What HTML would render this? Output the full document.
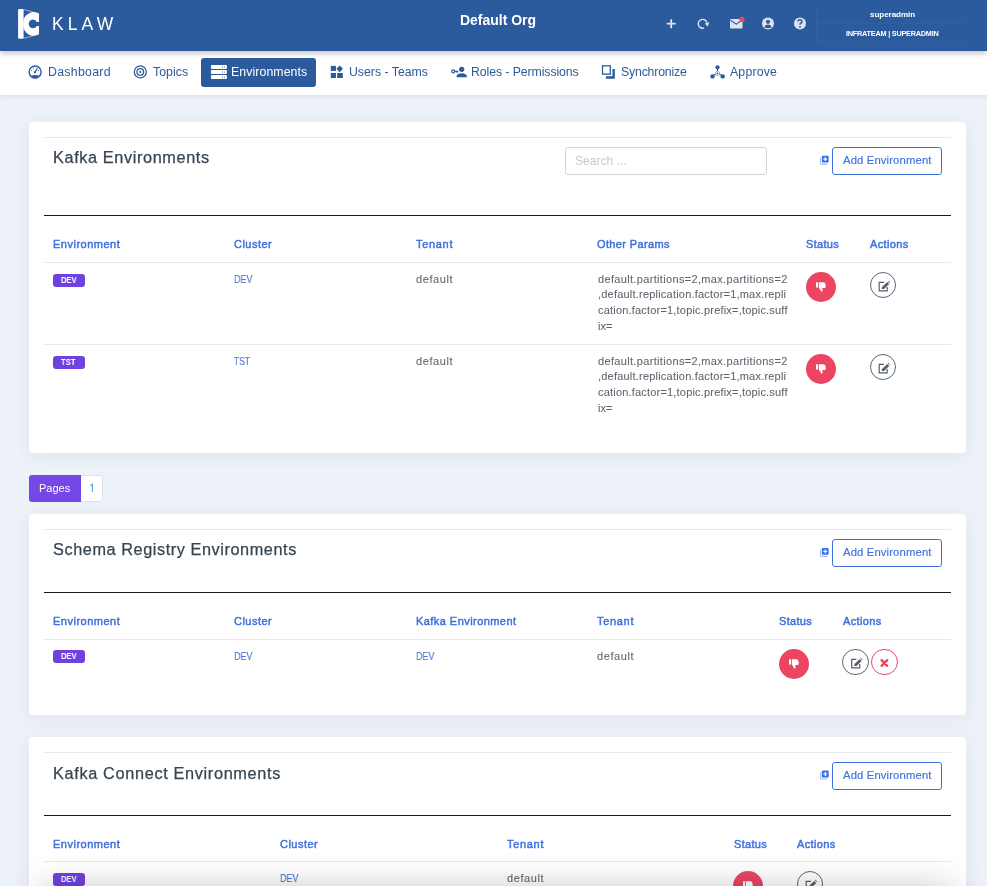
<!DOCTYPE html><html><head><meta charset="utf-8"><style>
*{margin:0;padding:0;box-sizing:border-box}
html,body{width:987px;height:886px;overflow:hidden}
body{background:#edf1f8;font-family:"Liberation Sans",sans-serif;position:relative}
.t{position:absolute;white-space:nowrap;line-height:1;will-change:transform}
.box{position:absolute}
svg{position:absolute;overflow:visible}
.card{position:absolute;left:29px;width:937px;background:#fff;border-radius:4px;box-shadow:0 3px 18px rgba(50,60,90,.07)}
.hl{position:absolute;left:44px;width:907px;height:1px;background:#e9ecef}
.bl{position:absolute;left:44px;width:907px;height:1px;background:#1a1a1a}
</style></head><body>
<div class="box" style="left:0px;top:0px;width:987px;height:51px;background:#2b5a9d;box-shadow:0 2px 6px rgba(0,0,0,.26);z-index:3"></div>
<div style="position:absolute;left:0;top:0;width:987px;height:51px;z-index:4">
<svg style="left:0;top:0" width="60" height="51" viewBox="0 0 60 51">
<rect x="18.1" y="9" width="5.5" height="29.7" rx="1.2" fill="#fff"/>
<path d="M23.3,20.2 A11,11.8 0 0 1 39,13.5 L39,21.9 L36.8,21.9 A4.3,4.3 0 1 0 36.8,25.9 L39,25.9 L39,34.3 A11,11.8 0 0 1 23.3,27.6 Z" fill="#fff"/>
<path d="M23.5,9.4 L33.5,12.2 M23.5,38.4 L33.5,35.6" stroke="rgba(255,255,255,.75)" stroke-width="0.7" fill="none"/>
</svg>
<div class="t" style="left:52.00px;top:16px;font-size:17.5px;color:#fff;font-weight:normal;letter-spacing:4.091px;">KLAW</div>
<div class="t" style="left:459.50px;top:13px;font-size:14px;color:#fff;font-weight:bold;letter-spacing:-0.018px;">Default Org</div>
<svg style="left:660px;top:12px" width="22" height="22" viewBox="660 12 22 22"><path d="M671.2,19.2 V28.2 M666.7,23.7 H675.7" stroke="#dde4ef" stroke-width="1.8"/></svg>
<svg style="left:690px;top:12px" width="26" height="24" viewBox="690 12 26 24"><path d="M704.2,27.9 A4.4,4.4 0 1 1 706.9,22.6" stroke="#dde4ef" stroke-width="1.4" fill="none"/><path d="M704.6,23.5 L709.3,22.2 L707.8,26.6 Z" fill="#dde4ef"/></svg>
<svg style="left:725px;top:12px" width="24" height="22" viewBox="725 12 24 22"><rect x="730" y="19" width="12.5" height="9.5" rx="1.2" fill="#dde4ef"/><path d="M730.5,20.2 L736.25,24.2 L742,20.2" stroke="#2b5a9d" stroke-width="1.1" fill="none"/><circle cx="742" cy="19.4" r="2.6" fill="#ef4562"/></svg>
<svg style="left:755px;top:12px" width="26" height="24" viewBox="755 12 26 24"><circle cx="768" cy="23.6" r="6" fill="#dde4ef"/><circle cx="768" cy="21.8" r="2.1" fill="#2b5a9d"/><path d="M764.2,27.2 Q765,24.6 768,24.6 Q771,24.6 771.8,27.2 Q768,29.4 764.2,27.2Z" fill="#2b5a9d"/></svg>
<svg style="left:787px;top:12px" width="26" height="24" viewBox="787 12 26 24"><circle cx="800" cy="23.6" r="6" fill="#dde4ef"/><path d="M798,21.6 Q798,19.7 800,19.7 Q802,19.7 802,21.5 Q802,22.7 800.8,23.2 Q800,23.6 800,24.8" stroke="#2b5a9d" stroke-width="1.5" fill="none"/><circle cx="800" cy="26.9" r="0.95" fill="#2b5a9d"/></svg>
<div class="box" style="left:816px;top:6px;width:151px;height:36px;border-left:1px solid rgba(255,255,255,.03);border-bottom:1px solid rgba(255,255,255,.03)"></div>
<div class="box" style="left:816px;top:23px;width:151px;height:1px;background:rgba(255,255,255,.03)"></div>
<div class="t" style="left:869.50px;top:11px;font-size:8.1px;color:#fff;font-weight:bold;letter-spacing:-0.081px;">superadmin</div>
<div class="t" style="left:845.50px;top:30px;font-size:7.3px;color:#fff;font-weight:bold;letter-spacing:-0.229px;">INFRATEAM | SUPERADMIN</div>
</div>
<div class="box" style="left:0px;top:51px;width:987px;height:44px;background:#fff;z-index:2;box-shadow:0 1px 6px rgba(40,50,70,.10)"></div>
<div style="position:absolute;left:0;top:0;width:987px;height:95px;z-index:3">
<div class="box" style="left:201px;top:58px;width:115px;height:29px;background:#2b5a9d;border-radius:3px"></div>
<div class="t" style="left:47.70px;top:66px;font-size:12.3px;color:#2b5a9d;font-weight:normal;letter-spacing:0.298px;">Dashboard</div>
<div class="t" style="left:153.00px;top:66px;font-size:12.3px;color:#2b5a9d;font-weight:normal;letter-spacing:0.059px;">Topics</div>
<div class="t" style="left:349.00px;top:66px;font-size:12.3px;color:#2b5a9d;font-weight:normal;letter-spacing:-0.009px;">Users - Teams</div>
<div class="t" style="left:471.00px;top:66px;font-size:12.3px;color:#2b5a9d;font-weight:normal;letter-spacing:-0.088px;">Roles - Permissions</div>
<div class="t" style="left:621.00px;top:66px;font-size:12.3px;color:#2b5a9d;font-weight:normal;letter-spacing:-0.183px;">Synchronize</div>
<div class="t" style="left:730.00px;top:66px;font-size:12.3px;color:#2b5a9d;font-weight:normal;letter-spacing:0.173px;">Approve</div>
<div class="t" style="left:231.00px;top:66px;font-size:12.3px;color:#fff;font-weight:normal;letter-spacing:0.088px;">Environments</div>
<svg style="left:0;top:0" width="987" height="95" viewBox="0 0 987 95">
<g fill="none" stroke="#2b5a9d" stroke-width="1.4"><circle cx="35.1" cy="72" r="6"/></g>
<path d="M30.3,76.2 Q35.1,73.6 39.9,76.2 Q38,78.4 35.1,78.4 Q32.2,78.4 30.3,76.2Z" fill="#2b5a9d"/>
<path d="M35.1,72.2 L37.3,68.3" stroke="#2b5a9d" stroke-width="1.3"/><circle cx="34.9" cy="72.3" r="1.1" fill="#2b5a9d"/>
<circle cx="31.6" cy="70.5" r="0.6" fill="#2b5a9d"/><circle cx="33.7" cy="68.5" r="0.6" fill="#2b5a9d"/><circle cx="38.5" cy="70.5" r="0.6" fill="#2b5a9d"/>
<g fill="none" stroke="#2b5a9d" stroke-width="1.3"><circle cx="140.3" cy="71.9" r="6"/><circle cx="140.3" cy="71.9" r="3.3"/></g>
<circle cx="140.3" cy="71.9" r="1.1" fill="#2b5a9d"/>
<g fill="#fff"><rect x="210.9" y="65" width="16" height="4" rx="1"/><rect x="210.9" y="70" width="16" height="4" rx="1"/><rect x="210.9" y="75" width="16" height="4" rx="1"/></g>
<g fill="#2b5a9d"><circle cx="222.5" cy="67" r=".6"/><circle cx="224.5" cy="67" r=".6"/><circle cx="222.5" cy="72" r=".6"/><circle cx="224.5" cy="72" r=".6"/><circle cx="222.5" cy="77" r=".6"/><circle cx="224.5" cy="77" r=".6"/></g>
<g fill="#2b5a9d"><rect x="330.8" y="65.9" width="5.2" height="5"/><rect x="330.8" y="73" width="5.2" height="5"/><rect x="337.2" y="73" width="5.6" height="5"/><path d="M339.7,65.4 L343,68.8 L339.7,72.2 L336.4,68.8Z"/></g>
<g fill="#2b5a9d"><circle cx="461.7" cy="69.3" r="2.6"/><path d="M456.4,77.3 Q456.6,73.4 461.7,73.3 Q466.8,73.4 467,77.3Z"/></g>
<circle cx="453.3" cy="71.4" r="1.5" fill="none" stroke="#2b5a9d" stroke-width="1.2"/><path d="M454.8,71.4 H458.3 M457.2,71.4 V73" stroke="#2b5a9d" stroke-width="1.1"/>
<rect x="602.5" y="65.8" width="7.8" height="8.3" fill="none" stroke="#2b5a9d" stroke-width="1.3"/>
<path d="M612.4,69.1 H614.8 V78.7 H605.9 V76.3 H612.4Z" fill="#2b5a9d"/>
<g fill="#2b5a9d"><circle cx="717.5" cy="67.3" r="2.1"/><circle cx="712.5" cy="76.4" r="2.2"/><circle cx="722.7" cy="76.4" r="2.2"/><circle cx="717.5" cy="73.4" r="0.9"/></g>
<circle cx="717.5" cy="73.6" r="2.2" fill="none" stroke="#2b5a9d" stroke-width=".7" stroke-opacity=".6"/>
<path d="M717.5,69 V71.2 M714,75.2 L715.6,73.8 M721,75.2 L719.4,73.8" stroke="#2b5a9d" stroke-width="1.1"/>
</svg>
</div>
<div class="card" style="top:122px;height:331px"></div>
<div class="card" style="top:513.7px;height:201.0999999999999px"></div>
<div class="card" style="top:737.2px;height:262.79999999999995px"></div>
<div class="box" style="left:44px;top:137px;width:907px;height:1px;background:#eae8ea"></div>
<div class="t" style="left:52.70px;top:149px;font-size:16.3px;color:#364452;font-weight:normal;letter-spacing:0.614px;-webkit-text-stroke:.25px #364452">Kafka Environments</div>
<div class="box" style="left:565px;top:147px;width:202px;height:28px;border:1px solid #d4d4d6;border-radius:3px;background:#fff"></div>
<div class="t" style="left:575.20px;top:155px;font-size:12px;color:#c6c8ca;font-weight:normal;letter-spacing:0.02px;">Search ...</div>
<svg style="left:0;top:0" width="987" height="886" viewBox="0 0 987 886"><g transform="translate(819.8,155.40)">
<path d="M0.75,2 V8.2 Q0.75,8.8 1.4,8.8 H7.4" fill="none" stroke="#3e70de" stroke-opacity=".45" stroke-width="1.2"/>
<rect x="2.1" y="0.4" width="6.8" height="6.8" rx="1" fill="#3e70de"/>
<path d="M5.5,1.9 V5.7 M3.6,3.8 H7.4" stroke="#fff" stroke-width="1.2"/></g></svg>
<div class="box" style="left:832px;top:147px;width:110px;height:28px;border:1px solid #3e70de;border-radius:3px"></div>
<div class="t" style="left:842.70px;top:155px;font-size:11.3px;color:#3e70de;font-weight:normal;letter-spacing:0.127px;-webkit-text-stroke:.15px #3e70de">Add Environment</div>
<div class="box" style="left:44px;top:215px;width:907px;height:1px;background:#1a1a1a"></div>
<div class="t" style="left:52.90px;top:239px;font-size:11px;color:#3e70de;font-weight:normal;letter-spacing:0.5px;-webkit-text-stroke:.45px #3e70de">Environment</div>
<div class="t" style="left:234.00px;top:239px;font-size:11px;color:#3e70de;font-weight:normal;letter-spacing:0.47px;-webkit-text-stroke:.45px #3e70de">Cluster</div>
<div class="t" style="left:416.00px;top:239px;font-size:11px;color:#3e70de;font-weight:normal;letter-spacing:0.686px;-webkit-text-stroke:.45px #3e70de">Tenant</div>
<div class="t" style="left:597.00px;top:239px;font-size:11px;color:#3e70de;font-weight:normal;letter-spacing:0.367px;-webkit-text-stroke:.45px #3e70de">Other Params</div>
<div class="t" style="left:806.00px;top:239px;font-size:11px;color:#3e70de;font-weight:normal;letter-spacing:0.323px;-webkit-text-stroke:.45px #3e70de">Status</div>
<div class="t" style="left:870.00px;top:239px;font-size:11px;color:#3e70de;font-weight:normal;letter-spacing:0.355px;-webkit-text-stroke:.45px #3e70de">Actions</div>
<div class="box" style="left:44px;top:262px;width:907px;height:1px;background:#eae8ea"></div>
<div class="box" style="left:53px;top:274px;width:32px;height:13px;background:#6f42e0;border-radius:3px"></div>
<div class="t" style="left:61.00px;top:275px;font-size:9.5px;color:#fff;font-weight:bold;letter-spacing:0px;transform:scaleX(.8);transform-origin:0 0">DEV</div>
<div class="t" style="left:234.00px;top:274px;font-size:11px;color:#4a78d6;font-weight:normal;letter-spacing:0px;-webkit-text-stroke:.12px #4a78d6;transform:scaleX(0.8161);transform-origin:0 0">DEV</div>
<div class="t" style="left:416.00px;top:274px;font-size:11px;color:#5f6770;font-weight:normal;letter-spacing:0.605px;-webkit-text-stroke:.08px #5a626b">default</div>
<div class="t" style="left:597.60px;top:274px;font-size:11px;color:#5f6770;font-weight:normal;letter-spacing:0.333px;-webkit-text-stroke:.08px #5a626b">default.partitions=2,max.partitions=2</div>
<div class="t" style="left:597.60px;top:289px;font-size:11px;color:#5f6770;font-weight:normal;letter-spacing:0.21px;-webkit-text-stroke:.08px #5a626b">,default.replication.factor=1,max.repli</div>
<div class="t" style="left:597.60px;top:305px;font-size:11px;color:#5f6770;font-weight:normal;letter-spacing:0.191px;-webkit-text-stroke:.08px #5a626b">cation.factor=1,topic.prefix=,topic.suff</div>
<div class="t" style="left:597.60px;top:321px;font-size:11px;color:#5f6770;font-weight:normal;letter-spacing:0.028px;-webkit-text-stroke:.08px #5a626b">ix=</div>
<div class="box" style="left:806px;top:272px;width:30px;height:30px;border-radius:50%;background:#ec4561"></div>
<svg style="left:0;top:0" width="987" height="886" viewBox="0 0 987 886"><g transform="translate(816,282)" fill="#fff">
<rect x="0" y="0.3" width="2" height="5.2"/>
<path d="M2.8,0.3 H7.5 Q9.2,0.3 9.4,2 L9.8,4.6 Q9.9,6 8.6,6 H6.2 L6.6,8.6 Q6.5,9.8 5.6,9.8 L2.8,5.6Z"/></g></svg>
<div class="box" style="left:870px;top:272px;width:26px;height:26px;border-radius:50%;border:1px solid #5a6570"></div>
<svg style="left:0;top:0" width="987" height="886" viewBox="0 0 987 886"><g transform="translate(878.6,281.7)">
<path d="M5.4,0.6 H0.6 V9.2 H8.6 V5.4" fill="none" stroke="#565f6a" stroke-width="1.2"/>
<path d="M3,7.4 L3.4,5.4 L8.6,0.2 L10.6,2.2 L5.4,7.4Z" fill="#565f6a"/><path d="M9.2,-0.4 L9.8,-1 L11.6,0.8 L11,1.4Z" fill="#565f6a"/></g></svg>
<div class="box" style="left:53px;top:356px;width:32px;height:13px;background:#6f42e0;border-radius:3px"></div>
<div class="t" style="left:61.00px;top:357px;font-size:9.5px;color:#fff;font-weight:bold;letter-spacing:0px;transform:scaleX(.8);transform-origin:0 0">TST</div>
<div class="t" style="left:234.00px;top:356px;font-size:11px;color:#4a78d6;font-weight:normal;letter-spacing:0px;-webkit-text-stroke:.12px #4a78d6;transform:scaleX(0.7789);transform-origin:0 0">TST</div>
<div class="t" style="left:416.00px;top:356px;font-size:11px;color:#5f6770;font-weight:normal;letter-spacing:0.605px;-webkit-text-stroke:.08px #5a626b">default</div>
<div class="t" style="left:597.60px;top:356px;font-size:11px;color:#5f6770;font-weight:normal;letter-spacing:0.333px;-webkit-text-stroke:.08px #5a626b">default.partitions=2,max.partitions=2</div>
<div class="t" style="left:597.60px;top:371px;font-size:11px;color:#5f6770;font-weight:normal;letter-spacing:0.21px;-webkit-text-stroke:.08px #5a626b">,default.replication.factor=1,max.repli</div>
<div class="t" style="left:597.60px;top:387px;font-size:11px;color:#5f6770;font-weight:normal;letter-spacing:0.191px;-webkit-text-stroke:.08px #5a626b">cation.factor=1,topic.prefix=,topic.suff</div>
<div class="t" style="left:597.60px;top:403px;font-size:11px;color:#5f6770;font-weight:normal;letter-spacing:0.028px;-webkit-text-stroke:.08px #5a626b">ix=</div>
<div class="box" style="left:806px;top:354px;width:30px;height:30px;border-radius:50%;background:#ec4561"></div>
<svg style="left:0;top:0" width="987" height="886" viewBox="0 0 987 886"><g transform="translate(816,364)" fill="#fff">
<rect x="0" y="0.3" width="2" height="5.2"/>
<path d="M2.8,0.3 H7.5 Q9.2,0.3 9.4,2 L9.8,4.6 Q9.9,6 8.6,6 H6.2 L6.6,8.6 Q6.5,9.8 5.6,9.8 L2.8,5.6Z"/></g></svg>
<div class="box" style="left:870px;top:354px;width:26px;height:26px;border-radius:50%;border:1px solid #5a6570"></div>
<svg style="left:0;top:0" width="987" height="886" viewBox="0 0 987 886"><g transform="translate(878.6,363.7)">
<path d="M5.4,0.6 H0.6 V9.2 H8.6 V5.4" fill="none" stroke="#565f6a" stroke-width="1.2"/>
<path d="M3,7.4 L3.4,5.4 L8.6,0.2 L10.6,2.2 L5.4,7.4Z" fill="#565f6a"/><path d="M9.2,-0.4 L9.8,-1 L11.6,0.8 L11,1.4Z" fill="#565f6a"/></g></svg>
<div class="box" style="left:44px;top:344px;width:907px;height:1px;background:#eae8ea"></div>
<div class="box" style="left:29px;top:475px;width:74px;height:26.5px;background:#fff;border:1px solid #dee2e6;border-radius:3px"></div>
<div class="box" style="left:29px;top:475px;width:52px;height:26.5px;background:#7447e6;border-radius:3px 0 0 3px"></div>
<div class="t" style="left:38.70px;top:483px;font-size:11px;color:#fff;font-weight:normal;letter-spacing:0.003px;">Pages</div>
<svg style="left:0;top:0" width="120" height="520" viewBox="0 0 120 520"><path d="M92.4,492 V484.2 L90.5,485.6" stroke="#55b6d0" stroke-width="1.3" fill="none"/></svg>
<div class="box" style="left:44px;top:529px;width:907px;height:1px;background:#eae8ea"></div>
<div class="t" style="left:52.80px;top:541px;font-size:16.3px;color:#364452;font-weight:normal;letter-spacing:0.567px;-webkit-text-stroke:.25px #364452">Schema Registry Environments</div>
<svg style="left:0;top:0" width="987" height="886" viewBox="0 0 987 886"><g transform="translate(819.8,547.60)">
<path d="M0.75,2 V8.2 Q0.75,8.8 1.4,8.8 H7.4" fill="none" stroke="#3e70de" stroke-opacity=".45" stroke-width="1.2"/>
<rect x="2.1" y="0.4" width="6.8" height="6.8" rx="1" fill="#3e70de"/>
<path d="M5.5,1.9 V5.7 M3.6,3.8 H7.4" stroke="#fff" stroke-width="1.2"/></g></svg>
<div class="box" style="left:832px;top:539.2px;width:110px;height:28.0px;border:1px solid #3e70de;border-radius:3px"></div>
<div class="t" style="left:842.70px;top:547px;font-size:11.3px;color:#3e70de;font-weight:normal;letter-spacing:0.127px;-webkit-text-stroke:.15px #3e70de">Add Environment</div>
<div class="box" style="left:44px;top:592px;width:907px;height:1px;background:#1a1a1a"></div>
<div class="t" style="left:52.90px;top:616px;font-size:11px;color:#3e70de;font-weight:normal;letter-spacing:0.5px;-webkit-text-stroke:.45px #3e70de">Environment</div>
<div class="t" style="left:234.00px;top:616px;font-size:11px;color:#3e70de;font-weight:normal;letter-spacing:0.47px;-webkit-text-stroke:.45px #3e70de">Cluster</div>
<div class="t" style="left:416.00px;top:616px;font-size:11px;color:#3e70de;font-weight:normal;letter-spacing:0.445px;-webkit-text-stroke:.45px #3e70de">Kafka Environment</div>
<div class="t" style="left:597.00px;top:616px;font-size:11px;color:#3e70de;font-weight:normal;letter-spacing:0.686px;-webkit-text-stroke:.45px #3e70de">Tenant</div>
<div class="t" style="left:779.00px;top:616px;font-size:11px;color:#3e70de;font-weight:normal;letter-spacing:0.323px;-webkit-text-stroke:.45px #3e70de">Status</div>
<div class="t" style="left:842.50px;top:616px;font-size:11px;color:#3e70de;font-weight:normal;letter-spacing:0.355px;-webkit-text-stroke:.45px #3e70de">Actions</div>
<div class="box" style="left:44px;top:639px;width:907px;height:1px;background:#eae8ea"></div>
<div class="box" style="left:53px;top:650px;width:32px;height:13px;background:#6f42e0;border-radius:3px"></div>
<div class="t" style="left:61.00px;top:651px;font-size:9.5px;color:#fff;font-weight:bold;letter-spacing:0px;transform:scaleX(.8);transform-origin:0 0">DEV</div>
<div class="t" style="left:234.00px;top:651px;font-size:11px;color:#4a78d6;font-weight:normal;letter-spacing:0px;-webkit-text-stroke:.12px #4a78d6;transform:scaleX(0.8161);transform-origin:0 0">DEV</div>
<div class="t" style="left:416.00px;top:651px;font-size:11px;color:#4a78d6;font-weight:normal;letter-spacing:0px;-webkit-text-stroke:.12px #4a78d6;transform:scaleX(0.8161);transform-origin:0 0">DEV</div>
<div class="t" style="left:597.00px;top:651px;font-size:11px;color:#5f6770;font-weight:normal;letter-spacing:0.605px;-webkit-text-stroke:.08px #5a626b">default</div>
<div class="box" style="left:779px;top:649px;width:30px;height:30px;border-radius:50%;background:#ec4561"></div>
<svg style="left:0;top:0" width="987" height="886" viewBox="0 0 987 886"><g transform="translate(789,659)" fill="#fff">
<rect x="0" y="0.3" width="2" height="5.2"/>
<path d="M2.8,0.3 H7.5 Q9.2,0.3 9.4,2 L9.8,4.6 Q9.9,6 8.6,6 H6.2 L6.6,8.6 Q6.5,9.8 5.6,9.8 L2.8,5.6Z"/></g></svg>
<div class="box" style="left:842.3px;top:648.8px;width:26.4px;height:26.4px;border-radius:50%;border:1px solid #5a6570"></div>
<svg style="left:0;top:0" width="987" height="886" viewBox="0 0 987 886"><g transform="translate(851.1,658.7)">
<path d="M5.4,0.6 H0.6 V9.2 H8.6 V5.4" fill="none" stroke="#565f6a" stroke-width="1.2"/>
<path d="M3,7.4 L3.4,5.4 L8.6,0.2 L10.6,2.2 L5.4,7.4Z" fill="#565f6a"/><path d="M9.2,-0.4 L9.8,-1 L11.6,0.8 L11,1.4Z" fill="#565f6a"/></g></svg>
<div class="box" style="left:871.1999999999999px;top:648.8px;width:26.4px;height:26.4px;border-radius:50%;border:1px solid #ec4561"></div>
<svg style="left:0;top:0" width="987" height="886" viewBox="0 0 987 886"><path d="M881.6,660.2 L887.1999999999999,665.8 M887.1999999999999,660.2 L881.6,665.8" stroke="#ec4561" stroke-width="2.4" stroke-linecap="round"/></svg>
<div class="box" style="left:44px;top:752px;width:907px;height:1px;background:#eae8ea"></div>
<div class="t" style="left:52.80px;top:765px;font-size:16.3px;color:#364452;font-weight:normal;letter-spacing:0.659px;-webkit-text-stroke:.25px #364452">Kafka Connect Environments</div>
<svg style="left:0;top:0" width="987" height="886" viewBox="0 0 987 886"><g transform="translate(819.8,770.20)">
<path d="M0.75,2 V8.2 Q0.75,8.8 1.4,8.8 H7.4" fill="none" stroke="#3e70de" stroke-opacity=".45" stroke-width="1.2"/>
<rect x="2.1" y="0.4" width="6.8" height="6.8" rx="1" fill="#3e70de"/>
<path d="M5.5,1.9 V5.7 M3.6,3.8 H7.4" stroke="#fff" stroke-width="1.2"/></g></svg>
<div class="box" style="left:832px;top:761.8px;width:110px;height:28.0px;border:1px solid #3e70de;border-radius:3px"></div>
<div class="t" style="left:842.70px;top:770px;font-size:11.3px;color:#3e70de;font-weight:normal;letter-spacing:0.127px;-webkit-text-stroke:.15px #3e70de">Add Environment</div>
<div class="box" style="left:44px;top:815px;width:907px;height:1px;background:#1a1a1a"></div>
<div class="t" style="left:52.90px;top:839px;font-size:11px;color:#3e70de;font-weight:normal;letter-spacing:0.5px;-webkit-text-stroke:.45px #3e70de">Environment</div>
<div class="t" style="left:280.00px;top:839px;font-size:11px;color:#3e70de;font-weight:normal;letter-spacing:0.47px;-webkit-text-stroke:.45px #3e70de">Cluster</div>
<div class="t" style="left:507.00px;top:839px;font-size:11px;color:#3e70de;font-weight:normal;letter-spacing:0.686px;-webkit-text-stroke:.45px #3e70de">Tenant</div>
<div class="t" style="left:734.00px;top:839px;font-size:11px;color:#3e70de;font-weight:normal;letter-spacing:0.323px;-webkit-text-stroke:.45px #3e70de">Status</div>
<div class="t" style="left:797.00px;top:839px;font-size:11px;color:#3e70de;font-weight:normal;letter-spacing:0.355px;-webkit-text-stroke:.45px #3e70de">Actions</div>
<div class="box" style="left:44px;top:861px;width:907px;height:1px;background:#eae8ea"></div>
<div class="box" style="left:53px;top:873.3px;width:32px;height:13px;background:#6f42e0;border-radius:3px"></div>
<div class="t" style="left:61.00px;top:874px;font-size:9.5px;color:#fff;font-weight:bold;letter-spacing:0px;transform:scaleX(.8);transform-origin:0 0">DEV</div>
<div class="t" style="left:280.00px;top:873px;font-size:11px;color:#4a78d6;font-weight:normal;letter-spacing:0px;-webkit-text-stroke:.12px #4a78d6;transform:scaleX(0.8161);transform-origin:0 0">DEV</div>
<div class="t" style="left:507.00px;top:873px;font-size:11px;color:#5f6770;font-weight:normal;letter-spacing:0.605px;-webkit-text-stroke:.08px #5a626b">default</div>
<div class="box" style="left:733px;top:871px;width:30px;height:30px;border-radius:50%;background:#ec4561"></div>
<svg style="left:0;top:0" width="987" height="886" viewBox="0 0 987 886"><g transform="translate(743,881)" fill="#fff">
<rect x="0" y="0.3" width="2" height="5.2"/>
<path d="M2.8,0.3 H7.5 Q9.2,0.3 9.4,2 L9.8,4.6 Q9.9,6 8.6,6 H6.2 L6.6,8.6 Q6.5,9.8 5.6,9.8 L2.8,5.6Z"/></g></svg>
<div class="box" style="left:797px;top:871px;width:26px;height:26px;border-radius:50%;border:1px solid #5a6570"></div>
<svg style="left:0;top:0" width="987" height="886" viewBox="0 0 987 886"><g transform="translate(805.6,880.7)">
<path d="M5.4,0.6 H0.6 V9.2 H8.6 V5.4" fill="none" stroke="#565f6a" stroke-width="1.2"/>
<path d="M3,7.4 L3.4,5.4 L8.6,0.2 L10.6,2.2 L5.4,7.4Z" fill="#565f6a"/><path d="M9.2,-0.4 L9.8,-1 L11.6,0.8 L11,1.4Z" fill="#565f6a"/></g></svg>
<div class="box" style="left:50px;top:898px;width:895px;height:60px;box-shadow:0 0 36px 8px rgba(0,0,0,.26);background:#ccc;z-index:5"></div>
</body></html>
